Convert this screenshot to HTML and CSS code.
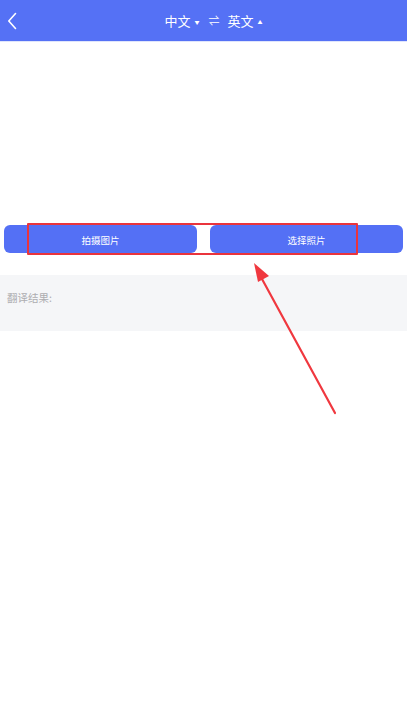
FILE: index.html
```html
<!DOCTYPE html>
<html lang="zh">
<head>
<meta charset="utf-8">
<title>拍照翻译</title>
<link rel="stylesheet" href="styles.css">
</head>
<body>
<div class="page">
  <header class="topbar">
    <div class="back">
      <svg width="10" height="18" viewBox="0 0 10 18"><path d="M8.5 1.5 L1.8 9 L8.5 16.5" fill="none" stroke="#fff" stroke-width="1.6" stroke-linecap="round" stroke-linejoin="round"/></svg>
    </div>
    <div class="title">
      <span class="lang">中文</span><span class="caret">▼</span>
      <span class="swap">⇌</span>
      <span class="lang">英文</span><span class="caret">▲</span>
    </div>
    <div></div>
  </header>
  <main class="content">
    <div class="actions">
      <button class="btn btn-left">拍摄图片</button>
      <button class="btn btn-right">选择照片</button>
      <div class="highlight"></div>
    </div>
    <section class="result">翻译结果:</section>
  </main>
  <svg class="arrow" width="407" height="720" viewBox="0 0 407 720">
    <path d="M335 413 L262 279" stroke="#f0383f" stroke-width="2.2" stroke-linecap="round" fill="none"/>
    <path d="M254 263 L269 276 L258 282 Z" fill="#f0383f"/>
  </svg>
</div>
</body>
</html>
```
FILE: styles.css
```css
* { box-sizing: border-box; }
html, body { margin: 0; padding: 0; background: #fff; }
body { font-family: "Noto Sans CJK SC", "Noto Sans", sans-serif; }
.page { position: relative; width: 407px; height: 720px; overflow: hidden; }
.topbar {
  height: 42px;
  background: #5571f5;
  border-bottom: 1px solid #dfe5fc;
  display: grid;
  grid-template-columns: 1fr auto 1fr;
  align-items: center;
  color: #fff;
}
.back { padding-left: 7px; display: flex; align-items: center; padding-top: 1px; }
.title { display: flex; align-items: center; font-size: 13px; line-height: 1; padding-left: 20px; }
.caret { font-size: 5px; margin-left: 4px; margin-top: 1px; }
.swap { font-size: 11px; margin: 0 8px 0 9px; }
.content { padding-top: 183px; }
.actions {
  position: relative;
  display: flex;
  gap: 13px;
  margin: 0 4px;
}
.btn {
  flex: 1;
  height: 28px;
  border: 0;
  border-radius: 6px;
  background: #5470f5;
  color: #fff;
  font-family: inherit;
  font-size: 9.5px;
  padding: 0;
  padding-top: 1px;
}
.highlight {
  position: absolute;
  left: 23px;
  top: -2px;
  width: 331px;
  height: 32px;
  border: 2px solid #ea343c;
  border-radius: 1px;
}
.result {
  margin-top: 22px;
  height: 56px;
  background: #f5f6f8;
  color: #adadb0;
  font-size: 10.5px;
  padding: 15px 0 0 7px;
}
.arrow { position: absolute; left: 0; top: 0; pointer-events: none; }
```
